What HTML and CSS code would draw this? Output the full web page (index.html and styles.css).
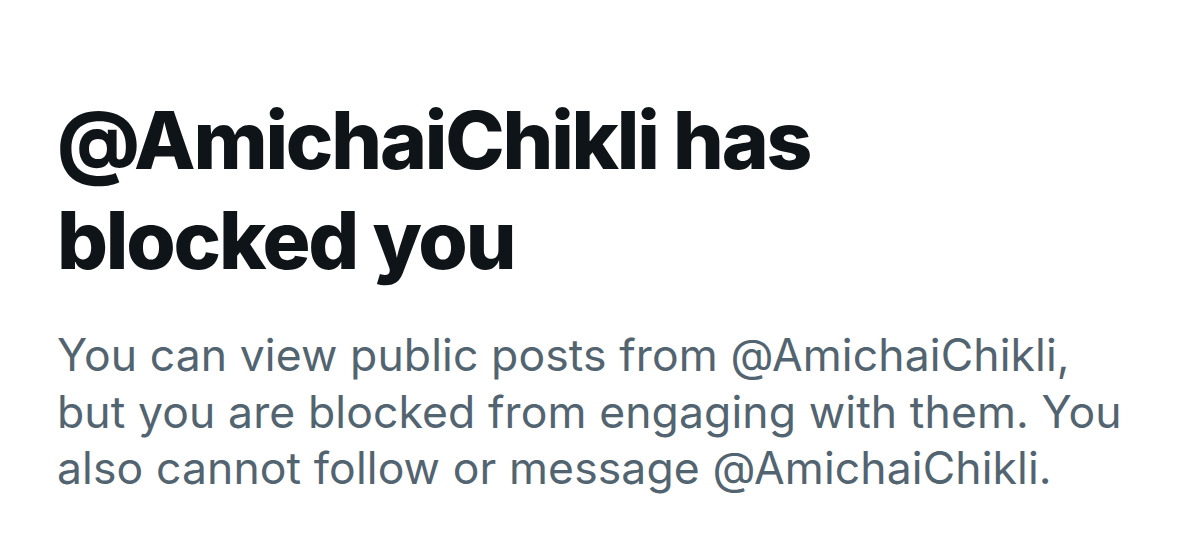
FILE: index.html
```html
<!DOCTYPE html>
<html lang="en">
<head>
<meta charset="utf-8">
<link rel="stylesheet" href="styles.css">
</head>
<body>
<main class="blocked">
  <h1 class="blocked-title">@AmichaiChikli has blocked you</h1>
  <p class="blocked-text">You can view public posts from @AmichaiChikli, but you are blocked from engaging with them. You also cannot follow or message @AmichaiChikli.</p>
</main>
</body>
</html>
```
FILE: styles.css
```css
html, body {
  margin: 0;
  padding: 0;
  background: #ffffff;
}
.blocked {
  padding: 90px 40px 0 57px;
  width: 1082px;
}
.blocked-title {
  margin: 0;
  font-family: Inter, "Liberation Sans", sans-serif;
  font-weight: 800;
  font-size: 80px;
  line-height: 100px;
  letter-spacing: -2.2px;
  color: #0f1419;
  width: 800px;
}
.blocked-text {
  margin: 37px 0 0;
  font-family: Inter, "Liberation Sans", sans-serif;
  font-weight: 400;
  font-size: 44.5px;
  line-height: 56.5px;
  letter-spacing: 0.1px;
  color: #536471;
}
```
